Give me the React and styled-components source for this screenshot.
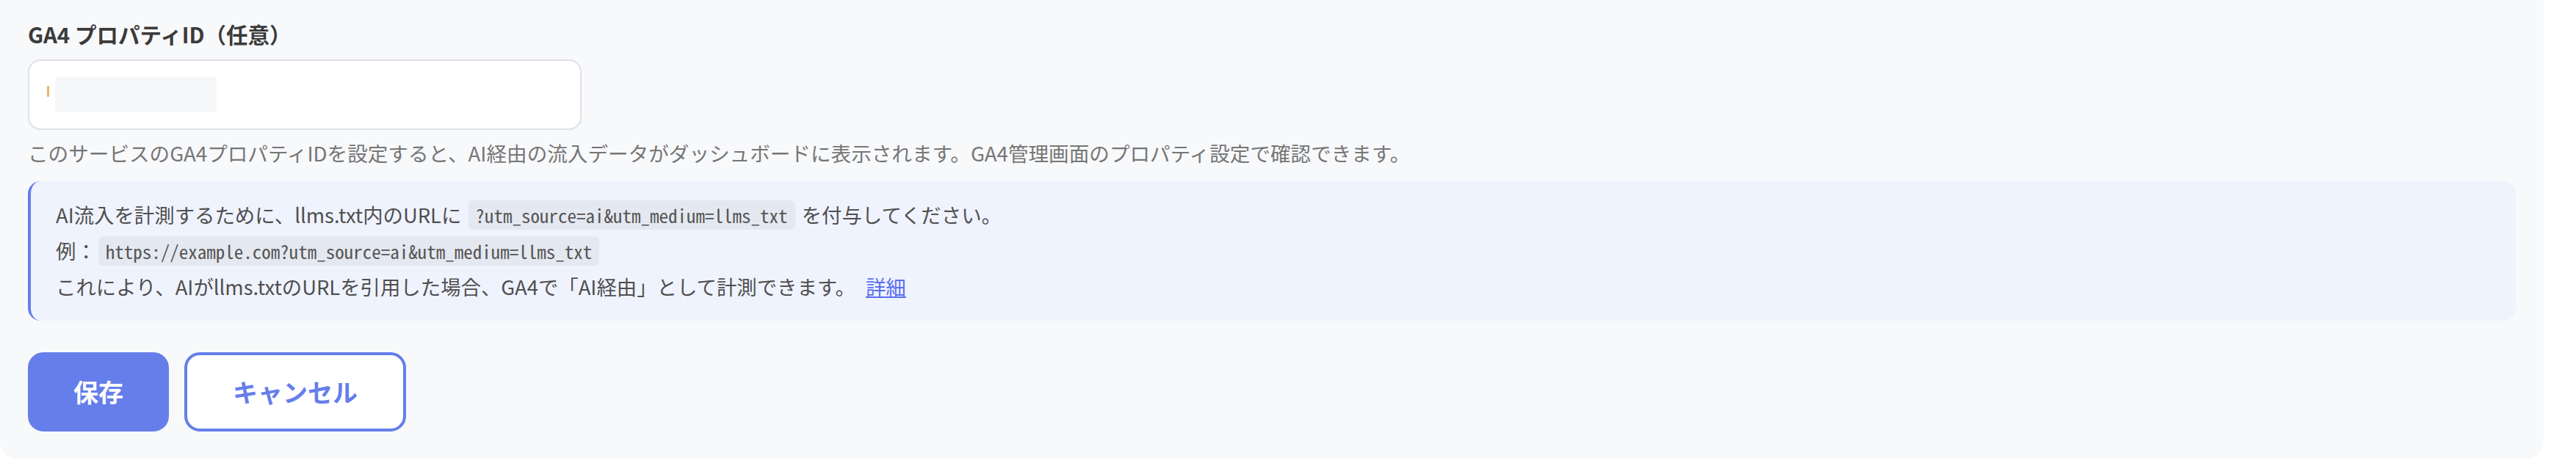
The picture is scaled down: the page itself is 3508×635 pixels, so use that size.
import React from 'react';
import styled, { createGlobalStyle } from 'styled-components';

const GlobalStyle = createGlobalStyle`
	body {
		margin: 0;
		background: #ffffff;
		font-family: 'Noto Sans CJK JP', 'Noto Sans', sans-serif;
	}
`;

const Panel = styled.section`
	width: 3464px;
	box-sizing: border-box;
	padding: 24px 38px 37px;
	background: #f8f9fb;
	border-radius: 0 0 24px 24px;
`;

const Label = styled.label`
	display: block;
	margin-bottom: 13px;
	font-size: 29.5px;
	line-height: 1.5;
	font-weight: 700;
	color: #3b3b3b;
`;

const InputBox = styled.div`
	display: flex;
	align-items: center;
	width: 754px;
	height: 96px;
	box-sizing: border-box;
	padding: 0 0 0 24px;
	background: #ffffff;
	border: 2px solid #dfe1e5;
	border-radius: 17px;
`;

// value is masked, only a sliver of the first character stays visible
const Sliver = styled.span`
	width: 3px;
	height: 15px;
	margin-top: -10px;
	background: #e9a34c;
	border-radius: 1px;
	opacity: 0.8;
`;

const Mask = styled.span`
	width: 220px;
	height: 48px;
	margin-left: 8px;
	background: #f6f7f9;
`;

const Hint = styled.p`
	margin: 11px 0 17px;
	font-size: 27.6px;
	line-height: 1.5;
	color: #767676;
`;

const InfoBox = styled.div`
	padding: 21px 34px;
	background: #eff3fe;
	border-left: 4px solid #667eea;
	border-radius: 17px;
	font-size: 27.4px;
	line-height: 1.8;
	color: #4f4f4f;
`;

const Line = styled.div`
	white-space: nowrap;
`;

const Code = styled.code`
	margin: 0 3px;
	padding: 2px 10px;
	background: #e4e8f0;
	border-radius: 6px;
	font-family: 'Noto Sans Mono CJK JP', 'DejaVu Sans Mono', monospace;
	font-size: 25px;
	color: #555555;
`;

const More = styled.a`
	margin-left: 14px;
	color: #5a6ff0;
	text-decoration: underline;
`;

const Actions = styled.div`
	display: flex;
	gap: 21px;
	margin-top: 43px;
`;

const Button = styled.button`
	height: 108px;
	padding: 0 ${(p) => (p.$outline ? 62 : 58)}px;
	border: 4px solid #667eea;
	border-radius: 21px;
	background: ${(p) => (p.$outline ? '#ffffff' : '#667eea')};
	color: ${(p) => (p.$outline ? '#667eea' : '#ffffff')};
	font-family: 'Noto Sans CJK JP', sans-serif;
	font-size: 34px;
	font-weight: 700;
	cursor: pointer;
`;

const App = () => {
	return (
		<>
			<GlobalStyle />
			<Panel>
				<Label htmlFor='ga4-property'>GA4 プロパティID（任意）</Label>
				<InputBox id='ga4-property'>
					<Sliver />
					<Mask />
				</InputBox>
				<Hint>
					このサービスのGA4プロパティIDを設定すると、AI経由の流入データがダッシュボードに表示されます。GA4管理画面のプロパティ設定で確認できます。
				</Hint>
				<InfoBox>
					<Line>
						AI流入を計測するために、llms.txt内のURLに <Code>?utm_source=ai&amp;utm_medium=llms_txt</Code> を付与してください。
					</Line>
					<Line>
						例：<Code>https://example.com?utm_source=ai&amp;utm_medium=llms_txt</Code>
					</Line>
					<Line>
						これにより、AIがllms.txtのURLを引用した場合、GA4で「AI経由」として計測できます。
						<More href='#'>詳細</More>
					</Line>
				</InfoBox>
				<Actions>
					<Button type='button'>保存</Button>
					<Button type='button' $outline>
						キャンセル
					</Button>
				</Actions>
			</Panel>
		</>
	);
};

export default App;
